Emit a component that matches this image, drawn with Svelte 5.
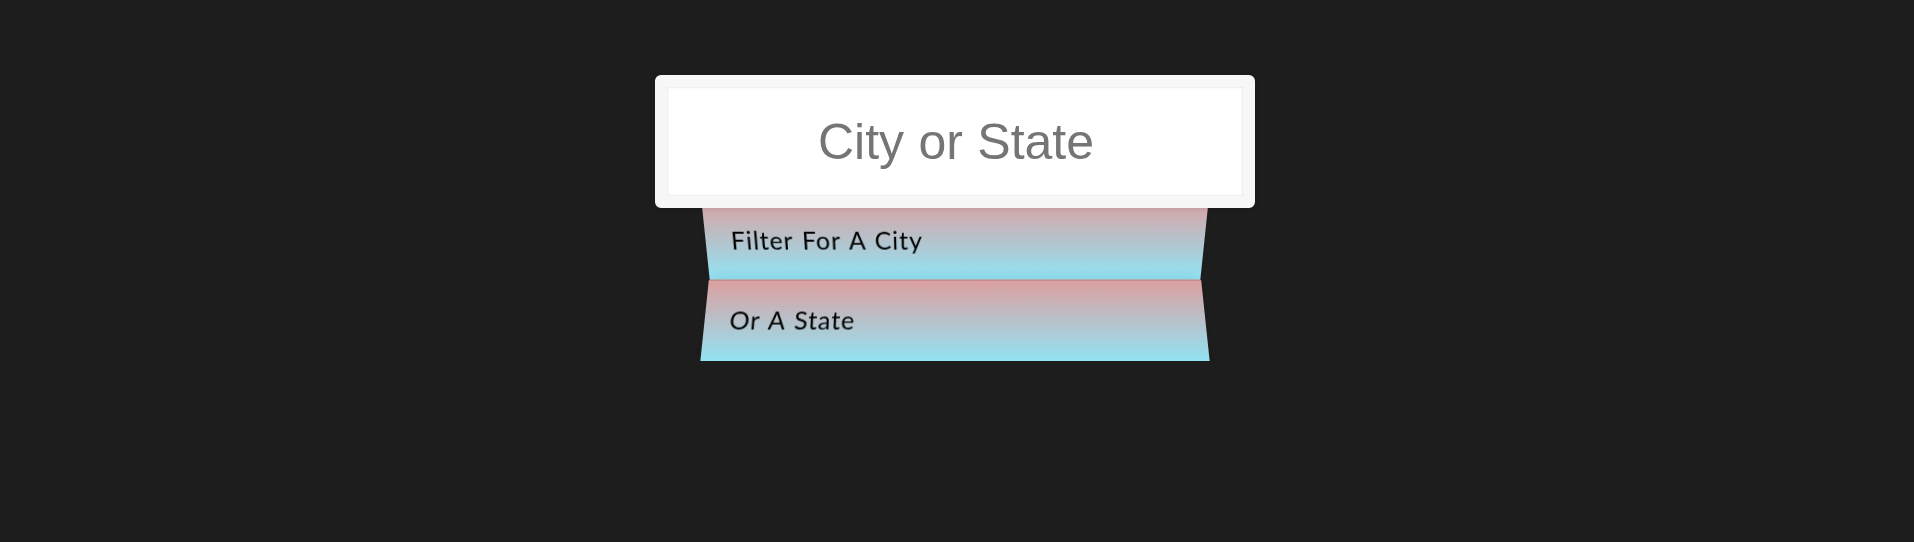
<script>
  const suggestions = ['Filter for a city', 'or a state'];
</script>

<form class="search-form" onsubmit={(e) => e.preventDefault()}>
  <input type="text" class="search" placeholder="City or State" />
  <ul class="suggestions">
    {#each suggestions as item}
      <li>{item}</li>
    {/each}
  </ul>
</form>

<style>
  :global(html) {
    background: #1d1d1d;
  }
  :global(body) {
    margin: 0;
    overflow: hidden;
  }
  :global(#app) {
    display: flow-root;
  }
  .search-form,
  .search-form * {
    box-sizing: border-box;
  }
  .search-form {
    width: 500px;
    margin: 75px auto 0;
    transform: translateX(-2px);
  }
  .search {
    display: block;
    position: relative;
    z-index: 2;
    width: 600px;
    height: 133px;
    margin: 0 0 0 -50px;
    padding: 25px 24px 25px 26px;
    border: 12px solid #f7f7f7;
    border-radius: 6px;
    outline: 0;
    background: #fff;
    box-shadow: 0 0 6px rgba(0, 0, 0, 0.12), inset 0 0 2.5px rgba(0, 0, 0, 0.19);
    font-family: "Liberation Sans", Arial, sans-serif;
    font-size: 50px;
    text-align: center;
    word-spacing: 0.5px;
  }
  .search::placeholder {
    color: #757575;
    opacity: 1;
  }
  .suggestions {
    position: relative;
    margin: -15.5px 0 0;
    padding: 0;
    list-style: none;
  }
  .suggestions li {
    height: 84px;
    padding: 26.5px 25.5px 0;
    border-bottom: 1px solid #d8d8d8;
    background: linear-gradient(to bottom, #dd9f9f 0%, #91e4f5 100%);
    box-shadow: 0 0 12.5px rgba(0, 0, 0, 0.14);
    color: #000;
    font-family: Lato, sans-serif;
    font-size: 25px;
    line-height: 33px;
    letter-spacing: 0.9px;
    word-spacing: 1.8px;
    text-transform: capitalize;
  }
  .suggestions li:nth-child(odd) {
    transform: perspective(125px) rotateX(-3deg) translateY(3.75px);
  }
  .suggestions li:nth-child(even) {
    padding: 23.5px 25px 0;
    transform: perspective(125px) rotateX(3deg) translateY(2.5px) scale(1.001);
  }
</style>
